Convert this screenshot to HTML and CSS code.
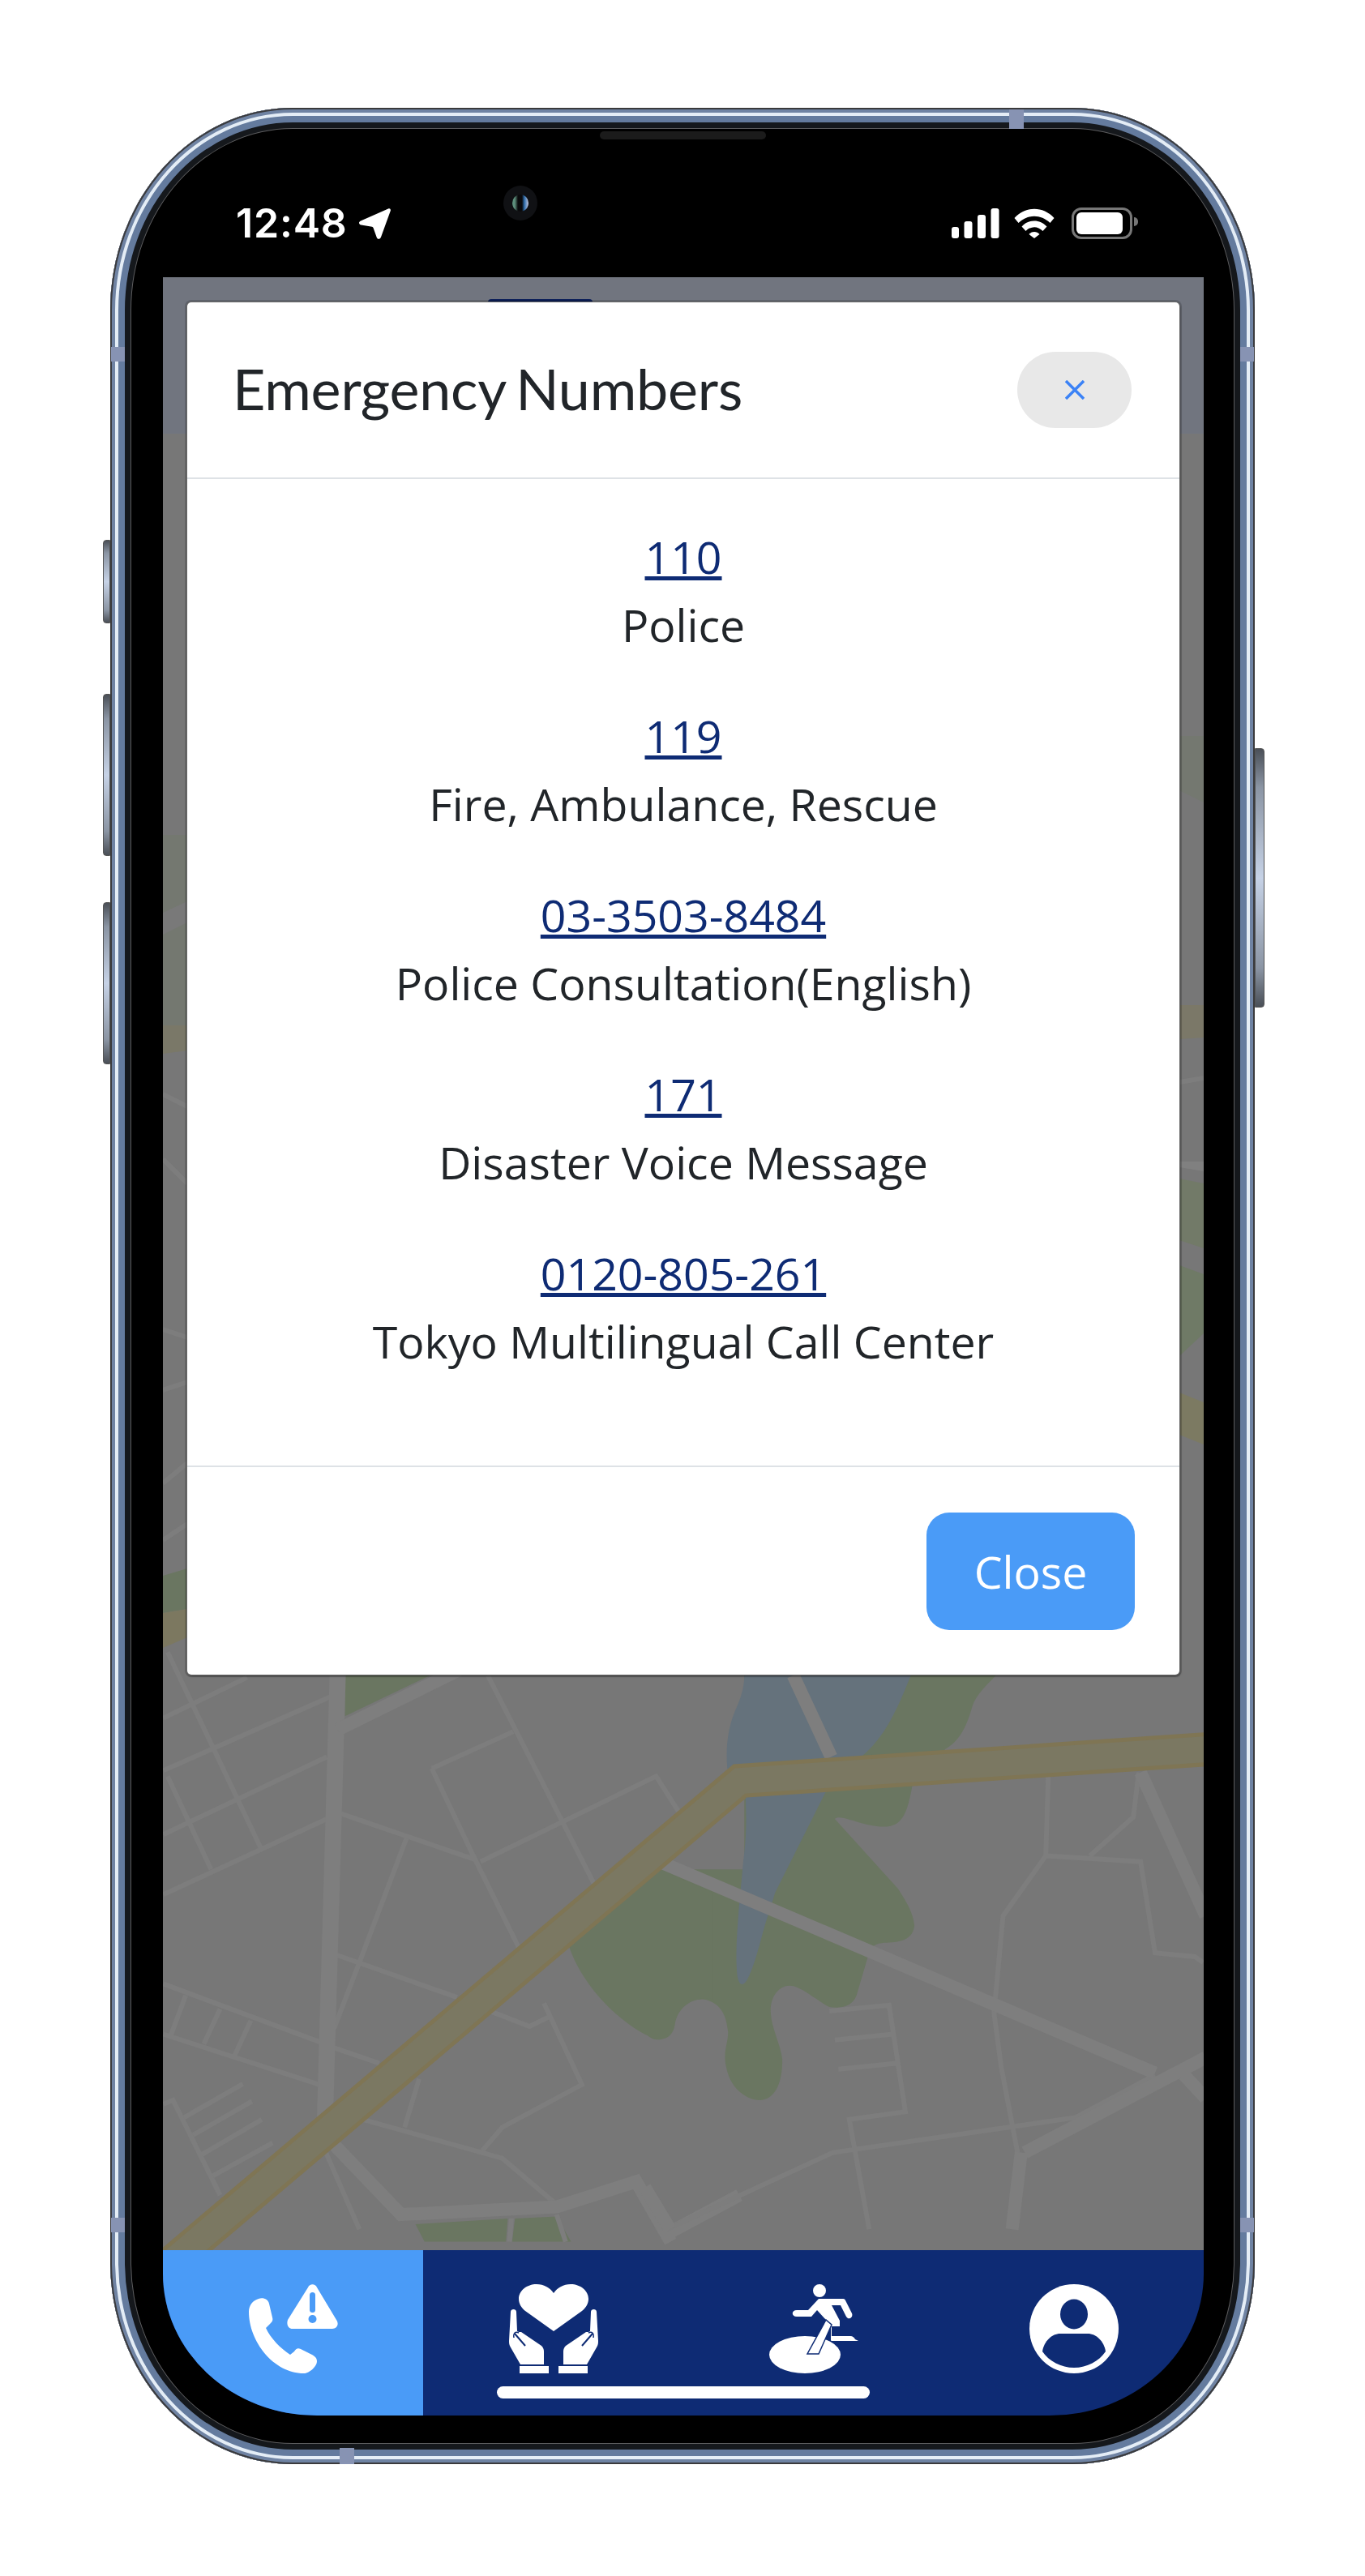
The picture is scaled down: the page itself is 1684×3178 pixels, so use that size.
FILE: index.html
```html
<!DOCTYPE html>
<html>
<head>
  <title>Emergency Numbers</title>
  <meta name="viewport" content="width=device-width, initial-scale=1">
  <link rel="stylesheet" href="styles.css">
</head>
<body>

  <div class="phone">
    <!-- hardware bits around the frame -->
    <span class="side-btn btn-mute"></span>
    <span class="side-btn btn-up"></span>
    <span class="side-btn btn-down"></span>
    <span class="side-btn btn-power"></span>
    <span class="band band-top"></span>
    <span class="band band-left"></span>
    <span class="band band-right"></span>
    <span class="band band-left2"></span>
    <span class="band band-right2"></span>
    <span class="band band-bottom"></span>
    <span class="speaker"></span>
    <span class="camera"><i></i></span>

    <div class="status">
      <div class="status-left">
        <span class="time">12:48</span>
        <svg class="arrow" width="39" height="38" viewBox="0 0 39 38"><path d="M36 0.5C38 -0.3 39.3 1 38.8 3L27 35.5C25.8 38.6 22.4 38.6 21.6 35.5L17.6 24.2C17.3 23.4 16.8 23 16 22.8L2.6 20.6C-0.6 20 -0.9 16.8 2 15.5Z" fill="#fff"/></svg>
      </div>
      <div class="status-right">
        <svg width="59" height="37" viewBox="0 0 59 37" fill="#fff">
          <rect x="0" y="23" width="9" height="14" rx="3"/>
          <rect x="15.500" y="16" width="10" height="21" rx="3"/>
          <rect x="32" y="8" width="10" height="29" rx="3"/>
          <rect x="48.500" y="0" width="10" height="37" rx="3"/>
        </svg>
        <svg width="50" height="37" viewBox="0 0 50 37" fill="#fff">
          <path d="M0.500 12C14 -3 36 -3 49.500 12L44.500 18C33 7 17 7 5.500 18Z"/>
          <path d="M9.500 22.500C18 13 32 13 40.500 22.500L35.500 28C29 21.500 21 21.500 14.500 28Z"/>
          <path d="M18.500 32C22 28 28 28 31.500 32L25 37Z"/>
        </svg>
        <div class="battery"><span></span></div>
      </div>
    </div>

    <div class="screen">
      <div class="map-area">
        <svg class="map" width="1284" height="2434" viewBox="201 342 1284 2434">
          <rect x="201" y="342" width="1284" height="2434" fill="#777"/>
          <rect x="201" y="342" width="1284" height="193" fill="#71757f"/>
          <rect x="602" y="369" width="129" height="8" rx="4" fill="#0c1f5a"/>

          <!-- bits showing behind the modal edges -->
          <path d="M201 1030H231V1265H201Z" fill="#747870"/>
          <path d="M1455 908H1485V990L1455 975Z" fill="#747870"/>
          <path d="M1455 1454L1485 1460V1540L1455 1530Z" fill="#727a68"/>
          <path d="M1455 1561L1485 1572V1645L1455 1673Z" fill="#6f7a66"/>
          <path d="M201 1126L231 1112V1138L201 1153Z" fill="#797979"/>
          <path d="M201 1265H231V1296L201 1300Z" fill="#7a7868"/>
          <path d="M1455 1240H1485V1280L1455 1282Z" fill="#7b7868"/>
          <path d="M1455 1718L1485 1730V1782L1455 1770Z" fill="#7c7a62"/>
          <path d="M1455 1433H1485V1445L1455 1440Z" fill="#808080"/>
          <path d="M1455 1335L1485 1330" class="thin"/>
          <path d="M201 1350L231 1365M201 1430L231 1460M201 1640L231 1650M201 1715L231 1705M201 1830L231 1805M201 1900L231 1880" class="thin"/>
          <path d="M201 1944L231 1935V1985L201 1990Z" fill="#6a7661"/>
          <path d="M201 1990L231 1985V2020L201 2033Z" fill="#7c7860"/>

          <g transform="translate(800 2000) scale(.4464 .4785)">
            <path d="M-60 640L0 640V1070C20 1085 50 1085 70 1040C75 1000 110 975 150 975C190 980 215 1005 220 1060C220 1090 205 1110 215 1150C225 1200 265 1235 310 1235C345 1232 370 1200 370 1130C365 1090 340 1050 338 1010C335 970 360 940 390 940C420 940 460 975 500 995C540 1000 565 990 575 965L605 870C612 845 620 832 645 830C680 828 730 830 735 785C732 750 710 720 690 690L515 510C530 495 590 530 650 530C700 530 715 500 730 420L820 330C860 310 880 270 895 220C905 190 935 165 960 140H265V640Z" fill="#6a7661"/>
            <path d="M265 140C265 170 255 200 240 230C222 270 212 320 218 380L268 450C272 520 270 560 262 620L250 740C245 800 240 860 245 910C250 945 265 945 280 910C300 870 315 800 330 760L350 700L490 440C510 400 560 370 600 340C660 290 695 210 725 140Z" fill="#65727c"/>
          </g>
          <g transform="translate(180 2000) scale(.4464 .4785)">
            <path d="M550 140H785L550 245Z" fill="#6a7661"/>
            <path d="M1170 840L1420 640L1568 700V975C1520 965 1470 990 1462 1040C1455 1080 1420 1085 1390 1070C1320 1040 1210 950 1170 840Z" fill="#6a7661"/>
            <path d="M745 1555L1000 1540L995 1600H770ZM1020 1540L1135 1535L1175 1600H1012Z" fill="#6a7661"/>

            <g class="thin">
              <path d="M60 80L320 590M48 250L280 145M48 385L510 195M48 550L500 350M48 705L500 510M60 400L180 640"/>
              <path d="M535 495L910 615L1035 850M790 380L1015 285M790 380L910 615M945 140L1240 680M925 620L1410 400L1475 495"/>
              <path d="M720 560L590 880L520 1050M525 860L860 970M950 1005L1060 1045L1115 1020M1100 985L1205 1195L985 1305L930 1365"/>
              <path d="M48 935L480 1085M48 1065L480 1195M110 965L70 1065M205 1000L160 1090M290 1030L245 1120"/>
              <path d="M520 1100L645 1140M755 1180L715 1305M600 1285L985 1385L1130 1500M48 1245L75 1235L205 1480"/>
              <path d="M105 1280L268 1193M130 1325L293 1238M155 1375L320 1285M185 1430L350 1345M495 1365L590 1568M1010 1540L1005 1600M1135 1530L1160 1600"/>
            </g>
            <g class="thick">
              <path d="M530 140L495 1280"/>
              <path class="mid" d="M530 280L900 110"/>
              <path class="mid" d="M510 1340L705 1530L1135 1510L1355 1445L1450 1600M1440 1580L1640 1480"/>
            </g>
          </g>
          <g transform="translate(800 2000) scale(.4464 .4785)">
            <g class="thin">
              <path d="M1105 400L1098 605L980 760L955 1010L975 1150L1020 1370M1098 605L1360 620L1400 855L1510 865L1533 880M1355 390L1340 505L1220 605"/>
              <path d="M500 1005L665 990L710 1265L555 1285L610 1568M515 1080L675 1065M525 1155L685 1140M50 1568L510 1370L1180 1280L1400 1170"/>
            </g>
            <g class="thick">
              <path class="mid" d="M400 140L505 350M30 620L1400 1165M1040 1370L1540 1125M1030 1370L1005 1568M1480 1170L1540 1230"/>
              <path class="mid" d="M1360 390L1540 760M-10 1460L60 1568"/>
            </g>
          </g>
          <polyline points="200,2801 913,2197 1490,2158" fill="none" stroke="#7f7554" stroke-width="42"/>
          <polyline points="200,2801 913,2197 1490,2158" fill="none" stroke="#7b7862" stroke-width="32"/>
        </svg>

        <div class="modal">
          <div class="modal-header">
            <h5>Emergency Numbers</h5>
            <button class="btn-x">
              <svg width="24" height="24" viewBox="0 0 24 24"><path d="M1 1L23 23M23 1L1 23" stroke="#3b82f6" stroke-width="3.500" fill="none"/></svg>
            </button>
          </div>
          <div class="modal-body">
            <p><a href="#">110</a><br>Police</p>
            <p><a href="#">119</a><br>Fire, Ambulance, Rescue</p>
            <p><a href="#">03-3503-8484</a><br>Police Consultation(English)</p>
            <p><a href="#">171</a><br>Disaster Voice Message</p>
            <p><a href="#">0120-805-261</a><br>Tokyo Multilingual Call Center</p>
          </div>
          <div class="modal-footer">
            <button class="btn-close">Close</button>
          </div>
        </div>
      </div>

      <div class="tabbar">
        <div class="tab active">
          <svg width="110" height="110" viewBox="0 0 110 110" fill="#fff">
            <path d="M12 18C5 20 0 26 0 34C0 70 30 110 68 110C74 110 84 102 84 95C84 90 80 88 76 86L64 80C60 78 58 80 56 83L51 87C40 80 26 66 21 54L27 48C29 46 30 44 29 41L25 24C24 19 18 16 12 18Z"/>
            <path d="M73 4C75 -1 82 -1 84 4L108 44C112 50 108 55 103 55H54C49 55 46 50 48 44Z"/>
            <rect x="75" y="10" width="7" height="25" rx="3.500" fill="#4a9bf7"/>
            <ellipse cx="78.500" cy="43" rx="5" ry="5" fill="#4a9bf7"/>
          </svg>
        </div>
        <div class="tab">
          <svg width="110" height="110" viewBox="0 0 110 110" fill="#fff">
            <path d="M55 11C60 4 67 0 76 0C88 0 98 8 98 18C98 24 95 29 90 33L55 58L20 33C15 29 12 24 12 18C12 8 22 0 34 0C43 0 50 4 55 11Z"/>
            <g id="hand">
              <path d="M2 34C2 30 9 30 9 34L10 58C11 59 13 59 15 59L40 76C42 78 43 80 43 83V99H14L2 78C0 75 0 72 0 70Z"/>
              <path d="M7 61L20 76" stroke="#0e2b74" stroke-width="2" fill="none"/>
              <path d="M6 66C5 60 8 58 12 60" stroke="#0e2b74" stroke-width="1.500" fill="none"/>
              <rect x="13" y="101" width="36" height="9"/>
            </g>
            <use href="#hand" transform="matrix(-1 0 0 1 110 0)"/>
          </svg>
        </div>
        <div class="tab">
          <svg width="110" height="110" viewBox="0 0 110 110" fill="#fff">
            <ellipse cx="44" cy="87" rx="44" ry="23"/>
            <ellipse cx="62" cy="8" rx="8" ry="8"/>
            <path d="M61 18H90C92 18 93 18 94 20L102 36C104 41 98 45 95 40L88 26H77L87 45V52H77V64H100C103 64 105 66 106 68L110 70H77C76 70 76 69 76 68V52L70 44L59 32L52 40H34C27 40 27 32 34 32H48Z"/>
            <path d="M70 44L47 86H61L77 50Z" stroke="#0e2b74" stroke-width="1.500"/>
          </svg>
        </div>
        <div class="tab">
          <svg width="110" height="110" viewBox="0 0 110 110">
            <circle cx="55" cy="55" r="55" fill="#fff"/>
            <ellipse cx="55" cy="37" rx="17" ry="18.500" fill="#0e2b74"/>
            <path d="M16 83C18 70 28 61 38 61H72C82 61 92 70 94 83C86 95 71 103 55 103C39 103 24 95 16 83Z" fill="#0e2b74"/>
          </svg>
        </div>
        <span class="home-bar"></span>
      </div>
    </div>
  </div>

</body>
</html>
```

FILE: styles.css
```css
body {
  margin: 0;
  background-color: #fff;
  font-family: "Open Sans", Arial, sans-serif;
}
.phone {
  position: relative;
  box-sizing: border-box;
  width: 1412px;
  height: 2907px;
  margin: 133px auto 138px;
  padding: 0 63px 60px 65px;
  background-color: #000;
  border-radius: 225px / 250px;
  box-shadow:
    inset 0 0 0 2px #3a3a3c,
    inset 0 0 0 6px #6f83a3,
    inset 0 0 0 10px #e4edf6,
    inset 0 0 0 18px #647b9e,
    inset 0 0 0 25px #15181c,
    inset 0 0 0 26px #5c5c5e;
}

/* frame details */
.side-btn {
  position: absolute;
  width: 9px;
  background: linear-gradient(#4a4f57, #8b95a4 15%, #c6d2e6 50%, #8b95a4 85%, #4a4f57);
  border: 1px solid #555;
  box-sizing: border-box;
}
.btn-mute { left: -9px; top: 533px; height: 103px; border-radius: 4px 0 0 4px; }
.btn-up { left: -9px; top: 723px; height: 200px; border-radius: 4px 0 0 4px; }
.btn-down { left: -9px; top: 980px; height: 200px; border-radius: 4px 0 0 4px; }
.btn-power { right: -12px; top: 790px; width: 12px; height: 320px; border-radius: 0 4px 4px 0; }
.band {
  position: absolute;
  background-color: #8793b3;
}
.band-top { left: 1109px; top: 2px; width: 18px; height: 24px; }
.band-bottom { left: 283px; bottom: 0; width: 18px; height: 20px; }
.band-left { left: 1px; top: 295px; width: 17px; height: 18px; }
.band-right { right: 1px; top: 295px; width: 17px; height: 18px; }
.band-left2 { left: 1px; top: 2603px; width: 17px; height: 18px; }
.band-right2 { right: 1px; top: 2603px; width: 17px; height: 18px; }
.speaker {
  position: absolute;
  left: 604px;
  top: 29px;
  width: 205px;
  height: 10px;
  background-color: #1b1b1b;
  border-radius: 5px;
}
.camera {
  position: absolute;
  left: 485px;
  top: 96px;
  width: 42px;
  height: 43px;
  background-color: #101114;
  border-radius: 50%;
}
.camera i {
  position: absolute;
  left: 11px;
  top: 11px;
  width: 20px;
  height: 21px;
  border-radius: 50%;
  background: linear-gradient(90deg, #5d8f7c 0, #5d8f7c 15%, #0a0a0c 35%, #0a0a0c 60%, #2f6fb0 75%, #c8cbe0 100%);
}

/* status bar */
.status {
  box-sizing: border-box;
  height: 209px;
  padding: 0 82px 47px 90px;
  display: flex;
  justify-content: space-between;
  align-items: flex-end;
  color: #fff;
}
.status-left {
  display: flex;
  align-items: flex-end;
  gap: 14px;
}
.time {
  font-family: Inter, sans-serif;
  font-size: 50px;
  font-weight: 600;
  line-height: 40px;
  letter-spacing: 0.8px;
}
.status-right {
  display: flex;
  align-items: center;
  gap: 18px;
}
.battery {
  position: relative;
  box-sizing: border-box;
  width: 75px;
  height: 39px;
  padding: 3px;
  border: 3px solid #777;
  border-radius: 12px;
  margin-left: 3px;
  margin-right: 6px;
}
.battery span {
  display: block;
  width: 57px;
  height: 100%;
  background-color: #fff;
  border-radius: 6px;
}
.battery::after {
  content: "";
  position: absolute;
  right: -10px;
  top: 9px;
  width: 5px;
  height: 11px;
  background-color: #777;
  border-radius: 0 5px 5px 0;
}

/* screen */
.screen {
  height: 2638px;
  display: flex;
  flex-direction: column;
  overflow: hidden;
  border-radius: 0 0 190px 190px / 0 0 175px 175px;
}
.map-area {
  position: relative;
  flex: 1;
  padding: 31px 30px 0;
}
.map {
  position: absolute;
  left: 0;
  top: 0;
}
.thin {
  fill: none;
  stroke: #7d7d7d;
  stroke-width: 6px;
}
.thin path, .thick path {
  vector-effect: non-scaling-stroke;
}
.thick {
  fill: none;
  stroke: #7e7e7e;
  stroke-width: 20px;
}
.thick .mid {
  stroke-width: 16px;
}

/* modal */
.modal {
  position: relative;
  background-color: #fff;
  border-radius: 5px;
  box-shadow: 0 0 0 1px #666, 0 0 0 3px rgba(0,0,0,0.16), 1px 2px 3px rgba(0,0,0,0.4);
}
.modal-header {
  box-sizing: border-box;
  height: 218px;
  padding: 0 59px 0 56px;
  display: flex;
  justify-content: space-between;
  align-items: center;
  border-bottom: 2px solid #dee2e6;
}
.modal-header h5 {
  margin: 0 0 4px;
  font-family: Lato, sans-serif;
  font-size: 70px;
  font-weight: 400;
  letter-spacing: -0.2px;
  word-spacing: -5px;
  color: #212529;
}
.btn-x {
  width: 141px;
  height: 94px;
  padding: 0;
  border: none;
  border-radius: 47px;
  background-color: #e8e8e8;
  display: flex;
  align-items: center;
  justify-content: center;
}
.modal-body {
  padding: 54px 16px 58px;
  text-align: center;
  font-size: 55.4px;
  line-height: 84px;
  color: #212529;
}
.modal-body p {
  margin: 0 0 53px;
}
.modal-body a {
  color: #0e2b74;
}
.modal-footer {
  padding: 56px 55px 55px;
  display: flex;
  justify-content: flex-end;
  border-top: 2px solid #dee2e6;
}
.btn-close {
  width: 257px;
  height: 145px;
  padding: 0;
  border: none;
  border-radius: 28px;
  background-color: #4a9bf7;
  color: #fff;
  font-family: "Open Sans", Arial, sans-serif;
  font-size: 55.4px;
  font-weight: 400;
}

/* bottom tabs */
.tabbar {
  position: relative;
  height: 204px;
  display: grid;
  grid-template-columns: repeat(4, 1fr);
  background-color: #0e2b74;
}
.tab {
  padding-top: 42px;
  text-align: center;
}
.tab.active {
  background-color: #4a9bf7;
}
.home-bar {
  position: absolute;
  left: 412px;
  bottom: 21px;
  width: 460px;
  height: 15px;
  background-color: #fff;
  border-radius: 8px;
}
```
